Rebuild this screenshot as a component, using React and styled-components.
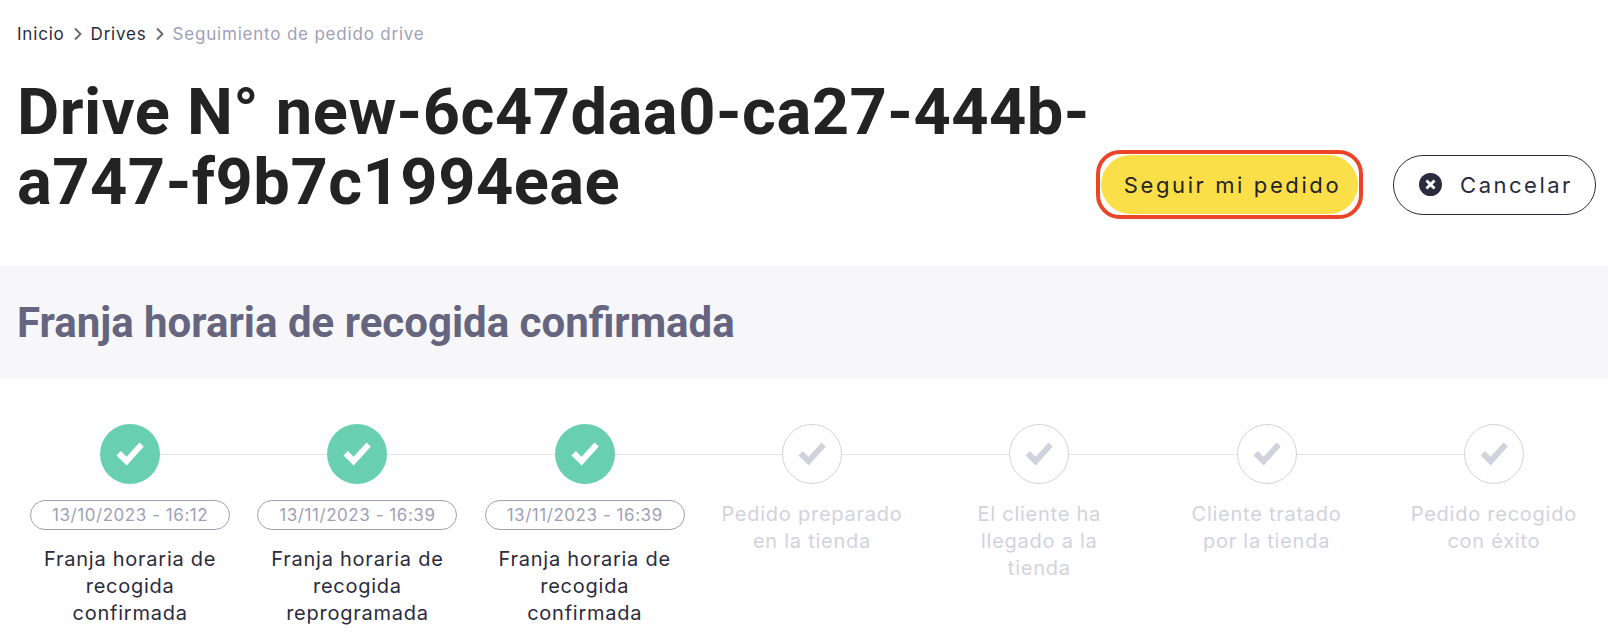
import React from "react";
import styled, { createGlobalStyle } from "styled-components";

const Global = createGlobalStyle`
  * { box-sizing: border-box; }
  html, body { margin: 0; background: #fff; }
  body { font-family: "Inter", "Open Sans", sans-serif; color: #232323; }
`;

const steps = [
  { label: "Franja horaria de recogida confirmada", date: "13/10/2023 - 16:12", done: true },
  { label: "Franja horaria de recogida reprogramada", date: "13/11/2023 - 16:39", done: true },
  { label: "Franja horaria de recogida confirmada", date: "13/11/2023 - 16:39", done: true },
  { label: "Pedido preparado en la tienda" },
  { label: "El cliente ha llegado a la tienda" },
  { label: "Cliente tratado por la tienda" },
  { label: "Pedido recogido con éxito" },
];

function App() {
  return (
    <Page>
      <Global />
      <Breadcrumb>
        <Crumb>Inicio</Crumb>
        <Chevron />
        <Crumb>Drives</Crumb>
        <Chevron />
        <Crumb $current>Seguimiento de pedido drive</Crumb>
      </Breadcrumb>
      <Header>
        <Title>Drive N° new-6c47daa0-ca27-444b-a747-f9b7c1994eae</Title>
        <Actions>
          <FocusRing>
            <PrimaryButton>Seguir mi pedido</PrimaryButton>
          </FocusRing>
          <OutlineButton>
            <CloseIcon />
            Cancelar
          </OutlineButton>
        </Actions>
      </Header>
      <Banner>
        <BannerTitle>Franja horaria de recogida confirmada</BannerTitle>
      </Banner>
      <Stepper>
        {steps.map((s, i) => (
          <Step key={i} $last={i === steps.length - 1}>
            <Circle $done={s.done}>
              <Check />
            </Circle>
            {s.date && <DatePill>{s.date}</DatePill>}
            <Label $done={s.done}>{s.label}</Label>
          </Step>
        ))}
      </Stepper>
    </Page>
  );
}

const Chevron = () => (
  <ChevronSvg viewBox="0 0 12 14" aria-hidden="true">
    <path d="M3 1.5 L8.5 7 L3 12.5" fill="none" stroke="currentColor" strokeWidth="1.8" />
  </ChevronSvg>
);

const CloseIcon = () => (
  <CloseSvg viewBox="0 0 24 24" aria-hidden="true">
    <circle cx="12" cy="12" r="12" fill="#2b2b3d" />
    <path d="M7.8 7.8 L16.2 16.2 M16.2 7.8 L7.8 16.2" stroke="#fff" strokeWidth="3" />
  </CloseSvg>
);

const Check = () => (
  <svg width="28" height="24" viewBox="0 0 28 24" aria-hidden="true">
    <path d="M0.5 13.5 L4.8 9 L10.6 14.8 L23.5 0.6 L27.8 4.6 L10.7 23.6 Z" fill="currentColor" />
  </svg>
);

const Page = styled.div`
  width: 1608px;
  height: 636px;
  overflow: hidden;
  padding-top: 24px;
`;

const Breadcrumb = styled.nav`
  display: flex;
  align-items: center;
  height: 19px;
  padding-left: 17px;
  font-size: 17px;
`;

const Crumb = styled.span`
  color: ${(p) => (p.$current ? "#9f9fb8" : "#2b2b3d")};
  letter-spacing: 0.8px;
`;

const ChevronSvg = styled.svg`
  width: 12px;
  height: 14px;
  margin: 0 7px;
  color: #666;
`;

const Header = styled.header`
  display: flex;
  justify-content: space-between;
  align-items: flex-end;
  padding: 28px 12px 47px 17px;
  height: 223px;
`;

const Title = styled.h1`
  margin: 0 0 2px;
  width: 1085px;
  font-family: "Roboto", sans-serif;
  font-weight: 700;
  font-size: 65px;
  line-height: 70px;
  letter-spacing: 0.5px;
  color: #232323;
`;

const Actions = styled.div`
  display: flex;
  align-items: center;
  gap: 30px;
`;

const FocusRing = styled.div`
  padding: 1px;
  border: 4px solid #ec4427;
  border-radius: 24px;
`;

const PrimaryButton = styled.button`
  display: block;
  width: 257px;
  height: 59px;
  padding: 0 0 0 6px;
  border: 0;
  border-radius: 29.5px;
  background: #fbdf48;
  font: 400 22px "Inter", sans-serif;
  letter-spacing: 2.6px;
  color: #232323;
`;

const OutlineButton = styled.button`
  display: flex;
  align-items: center;
  justify-content: center;
  gap: 18px;
  width: 203px;
  height: 60px;
  padding: 0 0 0 3px;
  border: 1px solid #2b2b3d;
  border-radius: 30px;
  background: #fff;
  font: 400 22px "Inter", sans-serif;
  letter-spacing: 2.5px;
  color: #2b2b3d;
`;

const CloseSvg = styled.svg`
  width: 23px;
  height: 23px;
`;

const Banner = styled.section`
  height: 113px;
  display: flex;
  align-items: center;
  padding-left: 17px;
  background: #f7f7f9;
`;

const BannerTitle = styled.h2`
  margin: 0;
  font-family: "Roboto", sans-serif;
  font-weight: 700;
  font-size: 42px;
  color: #65657f;
`;

const Stepper = styled.ol`
  display: grid;
  grid-template-columns: repeat(7, 1fr);
  list-style: none;
  margin: 45px 0 0;
  padding: 0 0.5px 0 16.5px;
`;

const Step = styled.li`
  position: relative;
  display: flex;
  flex-direction: column;
  align-items: center;
  &::after {
    content: "";
    display: ${(p) => (p.$last ? "none" : "block")};
    position: absolute;
    top: 30px;
    left: 50%;
    width: 100%;
    height: 1px;
    background: #e4e4ec;
  }
`;

const Circle = styled.div`
  position: relative;
  z-index: 1;
  width: 60px;
  height: 60px;
  display: flex;
  align-items: center;
  justify-content: center;
  border-radius: 50%;
  background: ${(p) => (p.$done ? "#68d0b0" : "#fff")};
  border: ${(p) => (p.$done ? "0" : "1px solid #d2d2de")};
  color: ${(p) => (p.$done ? "#fff" : "#d2d2de")};
`;

const DatePill = styled.div`
  width: 200px;
  height: 30px;
  margin-top: 16px;
  display: flex;
  align-items: center;
  justify-content: center;
  border: 1px solid #9f9fb8;
  border-radius: 15px;
  font-size: 17px;
  letter-spacing: 0.55px;
  color: #9f9fb8;
`;

const Label = styled.p`
  width: 183px;
  margin: ${(p) => (p.$done ? "16px 0 0" : "17px 0 0")};
  text-align: center;
  font-size: 20px;
  line-height: 27px;
  letter-spacing: 0.75px;
  color: ${(p) => (p.$done ? "#2b2b3d" : "#d2d2de")};
`;

export default App;
